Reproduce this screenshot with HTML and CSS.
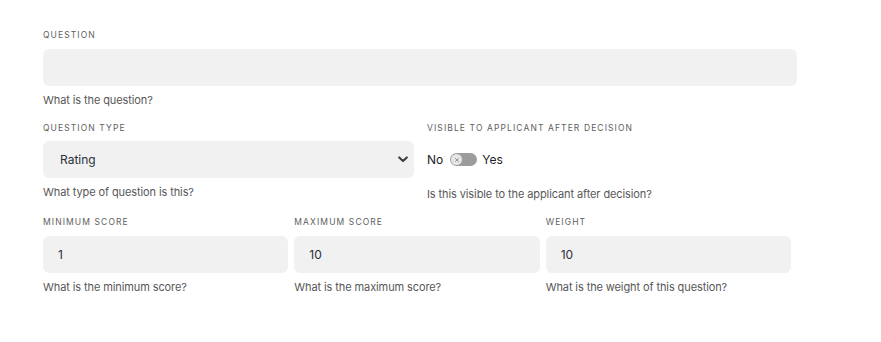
FILE: index.html
```html
<!DOCTYPE html>
<html lang="en">
<head>
<meta charset="utf-8">
<title>Question form</title>
<link rel="stylesheet" href="styles.css">
</head>
<body>
<form class="form">
  <div class="field">
    <label class="label">Question</label>
    <div class="input"></div>
    <p class="help">What is the question?</p>
  </div>

  <div class="row two">
    <div class="field">
      <label class="label label-tight">Question type</label>
      <div class="input select">
        <span class="value">Rating</span>
        <svg class="chev" width="10" height="7" viewBox="0 0 10 7"><path d="M1.2 1.4 L5 5 L8.8 1.4" fill="none" stroke="#3a3a3a" stroke-width="2" stroke-linecap="round" stroke-linejoin="round"/></svg>
      </div>
      <p class="help">What type of question is this?</p>
    </div>
    <div class="field">
      <label class="label label-tight">Visible to applicant after decision</label>
      <div class="toggle-row">
        <span class="opt">No</span>
        <span class="switch"><span class="knob"><svg width="6" height="6" viewBox="0 0 6 6"><path d="M1.5 1.5 L4.5 4.5 M4.5 1.5 L1.5 4.5" stroke="#8a8a8a" stroke-width="0.9" stroke-linecap="round"/></svg></span></span>
        <span class="opt">Yes</span>
      </div>
      <p class="help help-right">Is this visible to the applicant after decision?</p>
    </div>
  </div>

  <div class="row three">
    <div class="field">
      <label class="label">Minimum score</label>
      <div class="input"><span class="value">1</span></div>
      <p class="help">What is the minimum score?</p>
    </div>
    <div class="field">
      <label class="label">Maximum score</label>
      <div class="input"><span class="value">10</span></div>
      <p class="help">What is the maximum score?</p>
    </div>
    <div class="field">
      <label class="label">Weight</label>
      <div class="input"><span class="value">10</span></div>
      <p class="help">What is the weight of this question?</p>
    </div>
  </div>
</form>
</body>
</html>
```

FILE: styles.css
```css
* { box-sizing: border-box; }

body {
  margin: 0;
  background: #ffffff;
  font-family: Inter, "Noto Sans", sans-serif;
  color: #222;
}

.form {
  width: 754px;
  margin: 29px 0 0 43px;
  display: flex;
  flex-direction: column;
  gap: 15px;
}

.row {
  display: grid;
}

.row.two {
  grid-template-columns: 371px 1fr;
  column-gap: 13px;
}

.row.three {
  width: 748px;
  grid-template-columns: repeat(3, 1fr);
  column-gap: 6px;
}

.field {
  display: flex;
  flex-direction: column;
}

.label {
  display: block;
  font-size: 8.5px;
  line-height: 12px;
  letter-spacing: 1.1px;
  text-transform: uppercase;
  color: #5e5e5e;
  margin-bottom: 8px;
}

.label-tight { margin-bottom: 7px; }

.input {
  height: 37px;
  background: #f1f1f1;
  border-radius: 6px;
  display: flex;
  align-items: center;
  padding: 0 15px;
}

.value {
  font-size: 12px;
  color: #2b2f3a;
}

.select {
  padding: 0 6px 0 17px;
  justify-content: space-between;
}

.chev { display: block; }

.help {
  margin: 7px 0 0;
  font-size: 11px;
  line-height: 14px;
  color: #575757;
  letter-spacing: -0.1px;
}

.help-right { margin-top: 9px; }

.toggle-row {
  height: 37px;
  display: flex;
  align-items: center;
}

.opt {
  font-size: 12px;
  color: #1e1e1e;
}

.switch {
  width: 27px;
  height: 13px;
  margin: 0 5px 0 7px;
  border-radius: 7px;
  background: #9c9c9c;
  display: flex;
  align-items: center;
  padding-left: 1px;
}

.knob {
  width: 11px;
  height: 11px;
  border-radius: 50%;
  background: #e6e6e6;
  display: flex;
  align-items: center;
  justify-content: center;
}

.knob svg { display: block; }
```
